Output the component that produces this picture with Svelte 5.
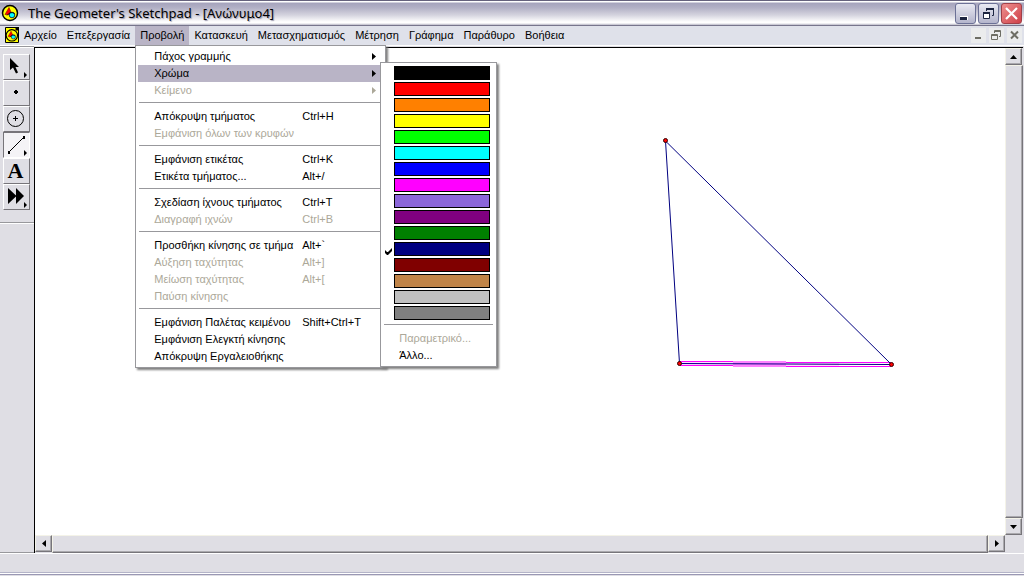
<script>
  const menus = ['Αρχείο', 'Επεξεργασία', 'Προβολή', 'Κατασκευή', 'Μετασχηματισμός', 'Μέτρηση', 'Γράφημα', 'Παράθυρο', 'Βοήθεια'];

  const groups = [
    [
      { label: 'Πάχος γραμμής', sub: true },
      { label: 'Χρώμα', sub: true, open: true },
      { label: 'Κείμενο', sub: true, off: true },
    ],
    [
      { label: 'Απόκρυψη τμήματος', key: 'Ctrl+H' },
      { label: 'Εμφάνιση όλων των κρυφών', off: true },
    ],
    [
      { label: 'Εμφάνιση ετικέτας', key: 'Ctrl+K' },
      { label: 'Ετικέτα τμήματος...', key: 'Alt+/' },
    ],
    [
      { label: 'Σχεδίαση ίχνους τμήματος', key: 'Ctrl+T' },
      { label: 'Διαγραφή ιχνών', key: 'Ctrl+B', off: true },
    ],
    [
      { label: 'Προσθήκη κίνησης σε τμήμα', key: 'Alt+`' },
      { label: 'Αύξηση ταχύτητας', key: 'Alt+]', off: true },
      { label: 'Μείωση ταχύτητας', key: 'Alt+[', off: true },
      { label: 'Παύση κίνησης', off: true },
    ],
    [
      { label: 'Εμφάνιση Παλέτας κειμένου', key: 'Shift+Ctrl+T' },
      { label: 'Εμφάνιση Ελεγκτή κίνησης' },
      { label: 'Απόκρυψη Εργαλειοθήκης' },
    ],
  ];

  const colours = [
    '#000000', '#ff0000', '#ff8000', '#ffff00', '#00ff00', '#00ffff', '#0000ff', '#ff00ff',
    '#8b66d9', '#800080', '#008000', '#000080', '#800000', '#c08448', '#c0c0c0', '#808080',
  ];
  let current = $state('#000080');
  let tool = $state('line');
  const tools = ['arrow', 'point', 'circle', 'line', 'text', 'custom'];
</script>

{#snippet logo()}
  <circle cx="9" cy="9" r="7.5" fill="#ff0" stroke="#000" stroke-width="1.5" />
  <path d="M8 3.500L11 10.500H4Z" fill="#f00" stroke="#800" stroke-width=".6" />
  <circle cx="11" cy="11" r="2.8" fill="#0ff" stroke="#003" stroke-width=".8" />
  <path d="M6 11.500Q9 7 13.500 9.500" fill="none" stroke="#000" stroke-width=".8" />
{/snippet}

<div class="window">
  <header class="title">
    <svg class="logo" width="18" height="18" viewBox="0 0 18 18" aria-hidden="true">{@render logo()}</svg>
    <h1>The Geometer's Sketchpad - [Ανώνυμο4]</h1>
    <div class="controls">
      <button class="cap" aria-label="Minimize"><svg width="19" height="19"><path d="M4 12h8v4H4z" fill="#fff" /><path d="M4 13h7v3H4z" fill="#1c2440" /></svg></button>
      <button class="cap" aria-label="Restore">
        <svg width="19" height="19" fill="none" stroke="#1c2440"><path d="M7.5 7V4.500H14.500V11.500H13" /><path d="M7 5h8" stroke-width="2" /><path d="M4.500 9.500h6v5h-6z" fill="#fff" /><path d="M4 9h7" stroke-width="2" /></svg>
      </button>
      <button class="cap close" aria-label="Close"><svg width="19" height="19"><path d="M4 4l11 11M15 4L4 15" stroke="#fff" stroke-width="2.200" /></svg></button>
    </div>
  </header>

  <nav class="menubar">
    <svg class="doc" width="14" height="16" viewBox="0 0 14 16" aria-hidden="true">
      <path d="M.5.500H11L13.500 3V15.500H.5z" fill="#ff0" stroke="#000" />
      <path d="M10.500 0V3.500H14V0z" fill="#000" />
      <g transform="translate(0 1.500) scale(.76)">{@render logo()}</g>
    </svg>
    {#each menus as m}
      <div class="menu">
        <button class="head" class:active={m === 'Προβολή'}>{m}</button>
        {#if m === 'Προβολή'}
          <div class="panel drop">
            {#each groups as group, g}
              {#if g}<hr />{/if}
              {#each group as it}
                <button class="row" class:open={it.open} disabled={it.off}>
                  <span class="name">{it.label}</span>
                  <span class="key">{it.key ?? ''}</span>
                  {#if it.sub}<svg class="more" width="4" height="7" aria-hidden="true"><path d="M0 0L4 3.500L0 7z" fill="currentColor" /></svg>{/if}
                </button>
              {/each}
            {/each}
            <div class="panel colours">
              {#each colours as c}
                <button class="swatch" aria-label={c} onclick={() => (current = c)}>
                  <span class="tick">
                    {#if current === c}<svg width="7" height="7" aria-hidden="true"><path d="M0 2v3l2 2h1l4-4V0L3 4H2z" fill="#000" /></svg>{/if}
                  </span>
                  <span class="chip" style:background={c}></span>
                </button>
              {/each}
              <hr />
              <button class="row" disabled><span class="name">Παραμετρικό...</span></button>
              <button class="row"><span class="name">Άλλο...</span></button>
            </div>
          </div>
        {/if}
      </div>
    {/each}
    <div class="mdi">
      <button aria-label="Minimize sketch"><svg width="15" height="15"><path d="M4 9h6v2H4z" fill="#6d6d64" /></svg></button>
      <button aria-label="Restore sketch">
        <svg width="15" height="15" fill="none" stroke="#6d6d64"><path d="M5.500 5V2.500H11.500V8.500H10M5 3.500h7M2.500 6.500h6v5h-6zM2 7.500h7" /></svg>
      </button>
      <button aria-label="Close sketch"><svg width="15" height="15"><path d="M4 3.500l7 7M11 3.500l-7 7" stroke="#6d6d64" stroke-width="2" /></svg></button>
    </div>
  </nav>

  <main>
    <aside>
      <div class="tools">
        {#each tools as t}
          <button class="tool" class:on={tool === t} aria-label={t} onclick={() => (tool = t)}>
            <svg width="24" height="24" aria-hidden="true">
              {#if t === 'arrow'}
                <path d="M6 3V15L9 12.500L12 18.500L14 17.500L11.500 12H15z" />
              {:else if t === 'point'}
                <path d="M11 9h2v1h1v2h-1v1h-2v-1h-1v-2h1z" />
              {:else if t === 'circle'}
                <circle cx="11.500" cy="11.500" r="8" fill="none" stroke="#000" />
                <path d="M9 11.500h5M11.500 9v5" stroke="#000" />
              {:else if t === 'line'}
                <path d="M4.500 19.500L19.500 4.500" stroke="#000" />
                <path d="M4 18h2v3h-2zM19 3h2v3h-2z" />
              {:else if t === 'text'}
                <text x="11.500" y="19" text-anchor="middle">A</text>
              {:else}
                <path d="M4 3L12 10.500V3L20 11L12 19V11.500L4 19z" />
              {/if}
              {#if t === 'arrow' || t === 'line' || t === 'custom'}<path d="M20 17l3 3l-3 3z" />{/if}
            </svg>
          </button>
        {/each}
      </div>
    </aside>
    <section class="sketch">
      <svg class="canvas" role="img" aria-label="Τρίγωνο">
        <path d="M645 313h53v5h-53z" fill="#ffd8ff" />
        <path d="M698 313h53v6h-53z" fill="#ff80ff" />
        <path d="M751 314h53v5h-53z" fill="#ffd8ff" />
        <path d="M645 313.500h53M751 314.500h105M645 317.500h53M751 318.500h105" stroke="#f0f" />
        <path d="M630.500 93L644.500 315.500L856.500 316.500Z" fill="none" stroke="#000080" />
        {#each [[630.5, 92.5], [644.5, 315.5], [856.5, 316.5]] as [x, y]}
          <circle cx={x} cy={y} r="2" fill="#f00" stroke="#300" />
        {/each}
      </svg>
      <div class="bar vert">
        <button aria-label="Up"><svg width="7" height="4"><path d="M0 4L3.500 0L7 4z" /></svg></button>
        <div class="thumb"></div>
        <button aria-label="Down"><svg width="7" height="4"><path d="M0 0L3.500 4L7 0z" /></svg></button>
      </div>
      <div class="bar horiz">
        <button aria-label="Left"><svg width="4" height="7"><path d="M4 0L0 3.500L4 7z" /></svg></button>
        <div class="thumb"></div>
        <button aria-label="Right"><svg width="4" height="7"><path d="M0 0L4 3.500L0 7z" /></svg></button>
      </div>
    </section>
  </main>
  <footer></footer>
</div>

<style>
  :global(body) { margin: 0; }
  .window {
    display: flex;
    flex-direction: column;
    height: 100vh;
    overflow: hidden;
    background: #dfdee4;
    color: #000;
    font: 11px/17px 'Liberation Sans', sans-serif;
  }
  button {
    box-sizing: border-box;
    margin: 0;
    padding: 0;
    border: 0;
    background: none;
    color: inherit;
    font: inherit;
  }
  svg { display: block; }
  .title {
    display: flex;
    align-items: center;
    height: 26px;
    flex: none;
    box-sizing: border-box;
    padding: 0 2px 0 1px;
    border-top: 1px solid #65617c;
    border-bottom: 1px solid #77758c;
    background: linear-gradient(#fff 0, #fff 1px, #a5a3bc 2px, #b3b1c6 7px, #d4d3de 14px, #fff 21px, #fff 22px, #b9b8c6 24px);
  }
  h1 {
    flex: 1;
    margin: 0 0 0 9px;
    font: 13px/20px 'Noto Sans', sans-serif;
    text-shadow: 1px 1px 1px #9a98ac;
  }
  .controls { display: flex; gap: 2px; }
  .cap {
    display: grid;
    place-items: center;
    width: 21px;
    height: 21px;
    border: 1px solid #6c7196;
    border-radius: 3px;
    background: linear-gradient(#e9e9f2, #b4b5cc);
  }
  .close { border-color: #a04048; background: linear-gradient(135deg, #ee9090, #cf4048); }
  .menubar {
    display: flex;
    align-items: stretch;
    flex: none;
    height: 19px;
    padding-left: 5px;
    background: #dfe1ea;
    border-bottom: 1px solid #fff;
  }
  .doc { margin-top: 1px; }
  .menu { position: relative; display: flex; }
  .head { padding: 0 5px; }
  .active { background: #b9b4c6; }
  .panel {
    position: absolute;
    z-index: 2;
    box-sizing: border-box;
    padding: 2px;
    border: 1px solid #98989c;
    background: #fff;
    box-shadow: 2px 2px 2px #808080;
  }
  .drop { top: 19px; left: 0; width: 251px; }
  .colours { top: 16px; left: 244px; width: 117px; }
  .row {
    display: flex;
    align-items: center;
    width: 100%;
    height: 17px;
    padding: 0 7px 0 16px;
    text-align: left;
    white-space: nowrap;
  }
  .row.open { background: #b9b4c6; }
  .row:disabled { color: #aca899; }
  .name { width: 148px; flex: none; }
  .key { flex: 1; }
  hr { height: 1px; margin: 3px 1px 5px; border: 0; background: #98989c; }
  .swatch { display: flex; align-items: center; width: 100%; height: 16px; }
  .tick { display: grid; place-items: end center; width: 11px; height: 11px; }
  .chip { box-sizing: border-box; width: 96px; height: 14px; border: 1px solid #000; }
  .mdi { display: flex; gap: 3px; margin: 2px 2px 2px auto; }
  .mdi button { width: 15px; background: #ebeced; }
  main { display: flex; flex: 1; min-height: 0; }
  aside {
    width: 34px;
    flex: none;
    border-top: 1px solid #98989c;
    box-sizing: border-box;
    border-bottom: 1px solid #98989c;
  }
  .tools {
    display: grid;
    justify-content: center;
    padding: 6px 2px 12px 0;
    border-top: 1px solid #fff;
    border-bottom: 1px solid #98989c;
    box-shadow: 0 1px #fff;
  }
  .tool {
    width: 27px;
    height: 26px;
    border: 1px solid;
    border-color: #fff #77757a #77757a #fff;
  }
  .tool.on { border-color: #77757a #fff #fff #77757a; background: #f4f3f6; }
  .tool text { font: bold 22px 'Liberation Serif', serif; }
  .sketch {
    display: grid;
    grid-template: minmax(0, 1fr) 18px / minmax(0, 1fr) 18px;
    flex: 1;
    min-width: 0;
    margin: 1px 1px 0 0;
    border-top: 1px solid #000;
    border-left: 1px solid #000;
  }
  .canvas { width: 100%; height: 100%; background: #fff; }
  .bar { display: flex; }
  .vert { flex-direction: column; }
  .bar button { display: grid; place-items: center; flex: none; width: 17px; height: 17px; }
  .bar button, .thumb {
    box-sizing: border-box;
    border: 1px solid;
    border-color: #f4f3e8 #77757a #77757a #f4f3e8;
    box-shadow: inset -1px -1px #aaa9ad;
  }
  .thumb { flex: 1; }
  footer {
    flex: none;
    height: 18px;
    border-top: 1px solid #fff;
    border-bottom: 1px solid #b4b4c8;
    box-shadow: 0 1px #fff, 0 2px #9a98b4;
    margin-bottom: 3px;
  }
</style>
